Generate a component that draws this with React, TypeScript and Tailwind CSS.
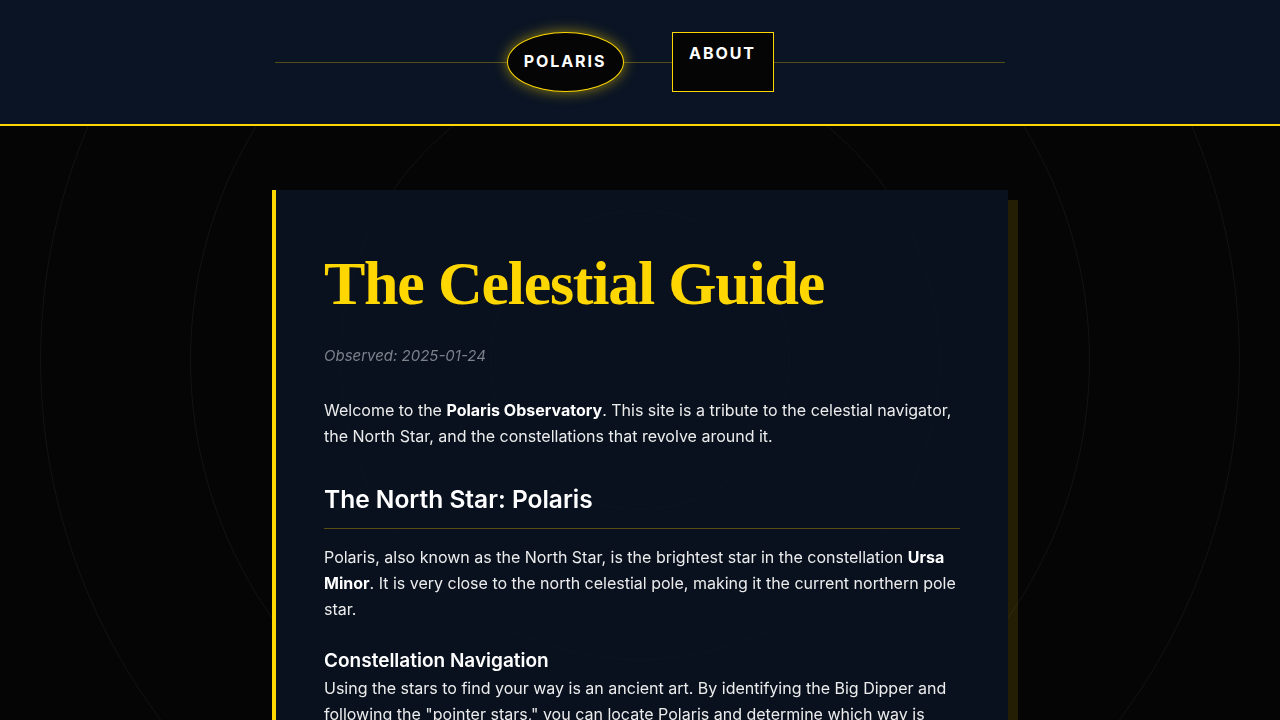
export default function App() {
  const rings = [
    'w-[300px] h-[300px]',
    'w-[600px] h-[600px]',
    'w-[900px] h-[900px]',
    'w-[1200px] h-[1200px]',
  ]

  return (
    <div className="relative min-h-screen bg-[#050505] text-[#ececec] font-['Inter','Noto_Sans',sans-serif] overflow-hidden">
      {/* concentric orbit rings behind everything */}
      <div className="pointer-events-none fixed inset-0 flex items-center justify-center">
        {rings.map((size) => (
          <div key={size} className={`absolute rounded-full border border-white/[0.06] ${size}`} />
        ))}
      </div>

      <header className="relative h-[126px] bg-[#0a1424] border-b-2 border-[#ffd700]">
        <div className="relative mx-auto w-[730px] h-full flex items-center justify-center">
          <div className="absolute left-0 right-0 top-[62px] h-px bg-[#ffd700]/30" />
          <nav className="relative flex items-center gap-12">
            <a className="flex items-center justify-center w-[117px] h-[60px] rounded-[50%] bg-[#050505] border border-[#ffd700] shadow-[0_0_14px_rgba(255,215,0,0.55)] text-white font-bold text-[16px] tracking-[0.12em] pb-[2px]">
              POLARIS
            </a>
            <a className="flex justify-center w-[102px] h-[60px] pt-[8px] bg-[#050505] border border-[#ffd700] text-white font-bold text-[16px] tracking-[0.12em]">
              ABOUT
            </a>
          </nav>
        </div>
      </header>

      <main className="relative pt-16 pb-16">
        <article className="mx-auto w-[736px] border-l-4 border-[#ffd700] bg-[#0a1424]/85 shadow-[10px_10px_0_rgba(255,215,0,0.12)] px-12 pt-[56px] pb-12">
          <h1 className="font-['Liberation_Serif','DejaVu_Serif',serif] font-bold text-[62px] tracking-[-0.02em] leading-[1.2] text-[#ffd700]">
            The Celestial Guide
          </h1>
          <p className="mt-[25px] text-[15px] italic text-[#7c818a]">Observed: 2025-01-24</p>

          <p className="mt-[29px] text-[16px] leading-[26px]">
            Welcome to the <strong className="font-bold text-white">Polaris Observatory</strong>. This site is a tribute to the celestial navigator, the North Star, and the constellations that revolve around it.
          </p>

          <h2 className="mt-[32px] pb-[10px] border-b border-[#5a4c12] text-[24.5px] font-semibold text-white">
            The North Star: Polaris
          </h2>

          <p className="mt-[15px] text-[16px] leading-[26px]">
            Polaris, also known as the North Star, is the brightest star in the constellation <strong className="font-bold text-white">Ursa Minor</strong>. It is very close to the north celestial pole, making it the current northern pole star.
          </p>

          <h3 className="mt-[25px] text-[19px] font-semibold text-white">Constellation Navigation</h3>
          <p className="text-[16px] leading-[26px]">
            Using the stars to find your way is an ancient art. By identifying the Big Dipper and following the "pointer stars," you can locate Polaris and determine which way is north, wherever you stand in the northern hemisphere.
          </p>
        </article>
      </main>
    </div>
  )
}
